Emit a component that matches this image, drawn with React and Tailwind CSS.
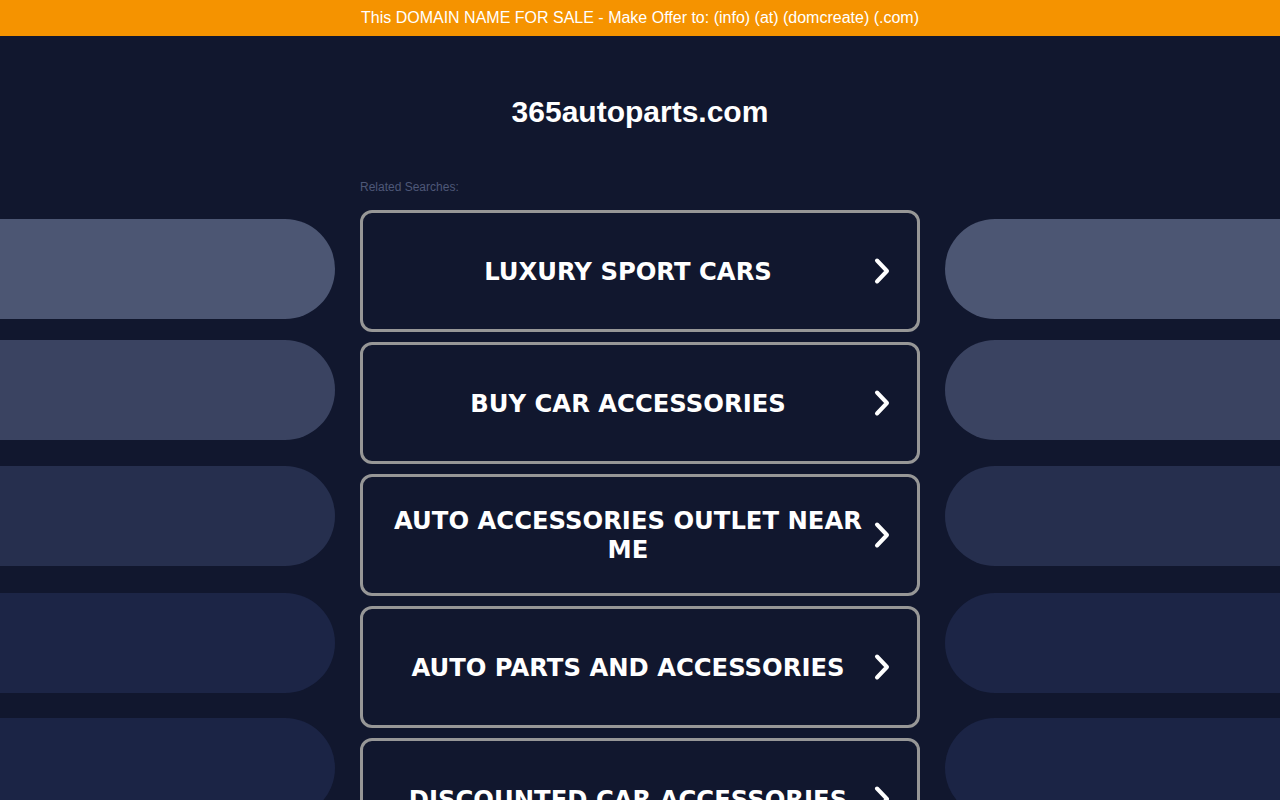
import React from "react";

const searches = [
  "LUXURY SPORT CARS",
  "BUY CAR ACCESSORIES",
  "AUTO ACCESSORIES OUTLET NEAR ME",
  "AUTO PARTS AND ACCESSORIES",
  "DISCOUNTED CAR ACCESSORIES",
];

const bars = [
  { color: "bg-[#4c5673]", mt: "mt-0" },
  { color: "bg-[#3a4361]", mt: "mt-[21px]" },
  { color: "bg-[#262f4e]", mt: "mt-[26px]" },
  { color: "bg-[#1c2546]", mt: "mt-[27px]" },
  { color: "bg-[#1b2445]", mt: "mt-[25px]" },
];

const Chevron = () => (
  <svg width="22" height="30" viewBox="0 0 22 30" fill="none">
    <path
      d="M6 4.5 L16 15 L6 25.5"
      stroke="white"
      strokeWidth="4"
      strokeLinecap="round"
      strokeLinejoin="round"
    />
  </svg>
);

const SideBars = ({ side }) => (
  <div className="w-[335px] shrink-0 pt-[183px] flex flex-col">
    {bars.map((b, i) => (
      <div
        key={i}
        className={`${b.mt} ${b.color} h-[100px] shrink-0 ${
          side === "left" ? "rounded-r-[50px]" : "rounded-l-[50px]"
        }`}
      />
    ))}
  </div>
);

export default function App() {
  return (
    <div className="h-[800px] overflow-hidden bg-[#11172e] font-['Liberation_Sans',Arial,sans-serif]">
      {/* sale banner */}
      <div className="h-9 bg-[#f59300] flex items-center justify-center text-white text-base">
        This DOMAIN NAME FOR SALE - Make Offer to: (info) (at) (domcreate) (.com)
      </div>

      <div className="flex gap-[25px]">
        <SideBars side="left" />

        <div className="w-[560px] shrink-0">
          <h1 className="pt-[58px] text-center text-white font-bold text-[30px] leading-[36px]">
            365autoparts.com
          </h1>
          <p className="mt-[50px] text-[12px] leading-[14px] text-[#4e5878]">
            Related Searches:
          </p>
          <div className="mt-4 flex flex-col gap-[10px]">
            {searches.map((s) => (
              <div
                key={s}
                className="h-[122px] shrink-0 rounded-[12px] border-[3px] border-[#979797] flex items-center pl-[22px] pr-6"
              >
                <span className="flex-1 text-center text-white font-bold text-[24.3px] leading-[29px] font-['DejaVu_Sans',Verdana,sans-serif]">
                  {s}
                </span>
                <Chevron />
              </div>
            ))}
          </div>
        </div>

        <SideBars side="right" />
      </div>
    </div>
  );
}
